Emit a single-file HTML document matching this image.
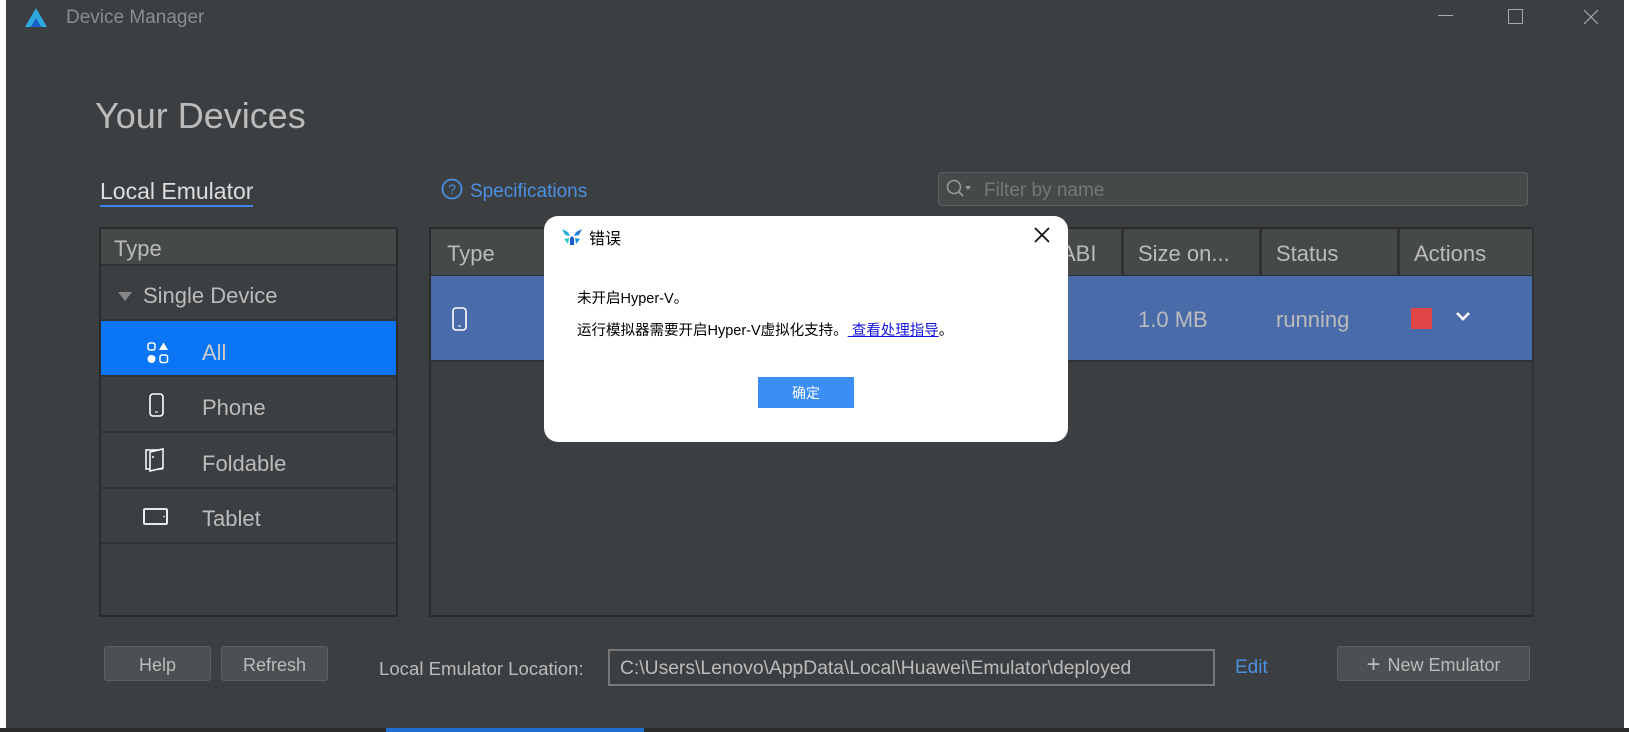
<!DOCTYPE html>
<html><head><meta charset="utf-8"><style>
*{box-sizing:border-box;margin:0;padding:0}
body{width:1629px;height:732px;background:#fff;position:relative;overflow:hidden;font-family:"Liberation Sans","Noto Sans CJK SC",sans-serif;color:#bbb}
.a{position:absolute}
.win{left:6px;top:0;width:1618px;height:728px;background:#3c3f41}
.row{position:absolute;left:0;right:0;border-bottom:2px solid #323232;font-size:22px;display:flex;align-items:center;padding-top:7px}
.btn{position:absolute;background:#4c5052;border:1px solid #5e6060;border-radius:3px;color:#bbb;font-size:18px;display:flex;align-items:center;justify-content:center}
.hd{position:absolute;top:0;height:47px;font-size:22px;display:flex;align-items:center;border-left:3px solid #323232;padding-left:14px;padding-top:3px}
</style></head><body>
<div class="a win"></div>
<div class="a" style="left:0;top:728px;width:1629px;height:4px;background:#2b2b2b"></div>
<div class="a" style="left:386px;top:728px;width:258px;height:4px;background:#1e6fd0"></div>
<!-- title bar -->
<svg class="a" style="left:24px;top:7px" width="24" height="22" viewBox="0 0 24 22"><path d="M12 1 L23 20 L17 20 L12 11 L7 20 L1 20 Z" fill="#2fa8e0"/><path d="M12 11 L17 20 L7 20Z" fill="#1a5fc9"/></svg>
<div class="a" style="left:66px;top:7px;font-size:19px;color:#8a8c8e">Device Manager</div>
<div class="a" style="left:1438px;top:15px;width:15px;height:1px;background:#aaa"></div>
<div class="a" style="left:1508px;top:9px;width:15px;height:15px;border:1px solid #aaa"></div>
<svg class="a" style="left:1583px;top:9px" width="16" height="16"><path d="M1 1L15 15M15 1L1 15" stroke="#aaa" stroke-width="1.2"/></svg>
<div class="a" style="left:95px;top:95px;font-size:36px;color:#bbb">Your Devices</div>
<div class="a" style="left:100px;top:179px;font-size:23px;color:#ddd;border-bottom:2px solid #3d86e8;padding-bottom:1px;line-height:25px">Local Emulator</div>
<svg class="a" style="left:441px;top:178px" width="22" height="22" viewBox="0 0 22 22"><circle cx="11" cy="11" r="9.5" fill="none" stroke="#4a90e2" stroke-width="1.8"/><text x="11" y="16" text-anchor="middle" font-size="14" fill="#4a90e2" font-family="Liberation Sans">?</text></svg>
<div class="a" style="left:470px;top:181px;font-size:19px;color:#4a90e2">Specifications</div>
<div class="a" style="left:938px;top:172px;width:590px;height:34px;background:#45494a;border:1px solid #5e6060;border-radius:4px"></div>
<svg class="a" style="left:945px;top:178px" width="30" height="22"><circle cx="9" cy="9" r="6.5" fill="none" stroke="#999" stroke-width="1.6"/><path d="M13.5 13.5L18 18" stroke="#999" stroke-width="1.8"/><path d="M20 8L26 8L23 12Z" fill="#999"/></svg>
<div class="a" style="left:984px;top:180px;font-size:19px;color:#777">Filter by name</div>
<!-- left panel -->
<div class="a" style="left:99px;top:227px;width:299px;height:390px;border:2px solid #2b2b2b;background:#3c3f41">
 <div class="row" style="top:0;height:37px;background:#45494a;padding-left:13px;padding-top:5px">Type</div>
 <div class="row" style="top:37px;height:55px;padding-left:42px"><span class="a" style="left:17px;top:26px;border:7px solid transparent;border-top:9px solid #888;border-bottom:0"></span>Single Device</div>
 <div class="row" style="top:92px;height:56px;background:#0a75f5;padding-left:101px;color:#ccc;padding-top:10px">All
  <svg class="a" style="left:46px;top:21px" width="22" height="22"><rect x="1" y="1" width="7" height="7" rx="2" fill="none" stroke="#fff" stroke-width="1.5"/><path d="M16.5 0.5L21 8H12Z" fill="#fff"/><circle cx="4.5" cy="17" r="4" fill="#fff"/><rect x="13" y="13" width="7.5" height="7.5" rx="2" fill="none" stroke="#fff" stroke-width="1.5"/></svg></div>
 <div class="row" style="top:148px;height:56px;padding-left:101px">Phone
  <svg class="a" style="left:48px;top:16px" width="16" height="26"><rect x="1" y="1" width="13" height="22" rx="3" fill="none" stroke="#fff" stroke-width="1.6"/><path d="M6 19h3" stroke="#fff"/></svg></div>
 <div class="row" style="top:204px;height:56px;padding-left:101px">Foldable
  <svg class="a" style="left:44px;top:15px" width="22" height="24"><rect x="1" y="2" width="16" height="19" fill="none" stroke="#fff" stroke-width="1.5"/><path d="M5 4L18 1V20L5 23Z" fill="#3c3f41" stroke="#fff" stroke-width="1.5"/><circle cx="8" cy="9" r="1" fill="#fff"/></svg></div>
 <div class="row" style="top:260px;height:55px;padding-left:101px">Tablet
  <svg class="a" style="left:42px;top:19px" width="26" height="18"><rect x="1" y="1" width="23" height="15" rx="1" fill="none" stroke="#fff" stroke-width="1.8"/><circle cx="21" cy="8.5" r="0.8" fill="#fff"/></svg></div>
</div>
<!-- right table -->
<div class="a" style="left:429px;top:227px;width:1105px;height:390px;border:2px solid #2b2b2b;border-right-color:#333;background:#3c3f41">
 <div class="a" style="left:0;top:0;right:0;height:47px;background:#45494a;border-bottom:1px solid #2b2b2b"></div>
 <div class="hd" style="left:0;border-left:0;padding-left:16px">Type</div>
 <div class="hd" style="left:616px;border-left:0">ABI</div>
 <div class="hd" style="left:690px">Size on...</div>
 <div class="hd" style="left:828px">Status</div>
 <div class="hd" style="left:966px">Actions</div>
 <div class="a" style="left:0;right:0;top:47px;height:84px;background:#4a6baa"></div>
 <svg class="a" style="left:21px;top:78px" width="16" height="26"><rect x="1" y="1" width="13" height="22" rx="3" fill="none" stroke="#fff" stroke-width="1.6"/><path d="M6 19h3" stroke="#fff"/></svg>
 <div class="a" style="left:707px;top:78px;font-size:22px">1.0 MB</div>
 <div class="a" style="left:845px;top:78px;font-size:22px">running</div>
 <div class="a" style="left:980px;top:79px;width:21px;height:21px;background:#e04444"></div>
 <svg class="a" style="left:1024px;top:82px" width="16" height="12"><path d="M2 2L8 8L14 2" fill="none" stroke="#fff" stroke-width="2.6"/></svg>
 <div class="a" style="left:0;right:0;top:131px;height:2px;background:#323232"></div>
</div>
<!-- bottom -->
<div class="btn" style="left:104px;top:646px;width:107px;height:35px;padding-top:3px">Help</div>
<div class="btn" style="left:221px;top:646px;width:107px;height:35px;padding-top:3px">Refresh</div>
<div class="a" style="left:379px;top:658px;font-size:18.6px;color:#bbb">Local Emulator Location:</div>
<div class="a" style="left:608px;top:649px;width:607px;height:37px;border:2px solid #777;background:#3c3f41;font-size:19.3px;padding:7px 10px;color:#bbb">C:\Users\Lenovo\AppData\Local\Huawei\Emulator\deployed</div>
<div class="a" style="left:1235px;top:657px;font-size:19px;color:#4a90e2">Edit</div>
<div class="btn" style="left:1337px;top:646px;width:193px;height:35px;padding-top:3px"><span style="font-size:24px;margin-right:7px;line-height:20px">+</span>New Emulator</div>
<!-- dialog -->
<div class="a" style="left:544px;top:216px;width:524px;height:226px;background:#fff;border-radius:14px;color:#000;font-family:'Liberation Sans','Noto Sans CJK SC',sans-serif">
 <svg class="a" style="left:17px;top:10px" width="22" height="20" viewBox="0 0 22 20"><path d="M1 3L7 6L9 10L4 9Z" fill="#2ab0d8"/><path d="M21 3L15 6L13 10L18 9Z" fill="#2a7fd8"/><path d="M9 12L11 10L13 12V19H9Z" fill="#1a5fc9"/><path d="M3 13L8 12L7 18Z" fill="#3cc"/><path d="M19 13L14 12L15 18Z" fill="#1a8fd8"/></svg>
 <div class="a" style="left:45px;top:9px;font-size:16px">错误</div>
 <svg class="a" style="left:490px;top:11px" width="16" height="16"><path d="M1 1L15 15M15 1L1 15" stroke="#111" stroke-width="1.8"/></svg>
 <div class="a" style="left:33px;top:71px;font-size:14.5px">未开启Hyper-V。</div>
 <div class="a" style="left:33px;top:103px;font-size:14.5px">运行模拟器需要开启Hyper-V虚拟化支持。<span style="color:#1515e0;text-decoration:underline"> 查看处理指导</span>。</div>
 <div class="a" style="left:214px;top:161px;width:96px;height:31px;background:#3a8ef6;color:#fff;font-size:14px;display:flex;align-items:center;justify-content:center">确定</div>
</div>
</body></html>
